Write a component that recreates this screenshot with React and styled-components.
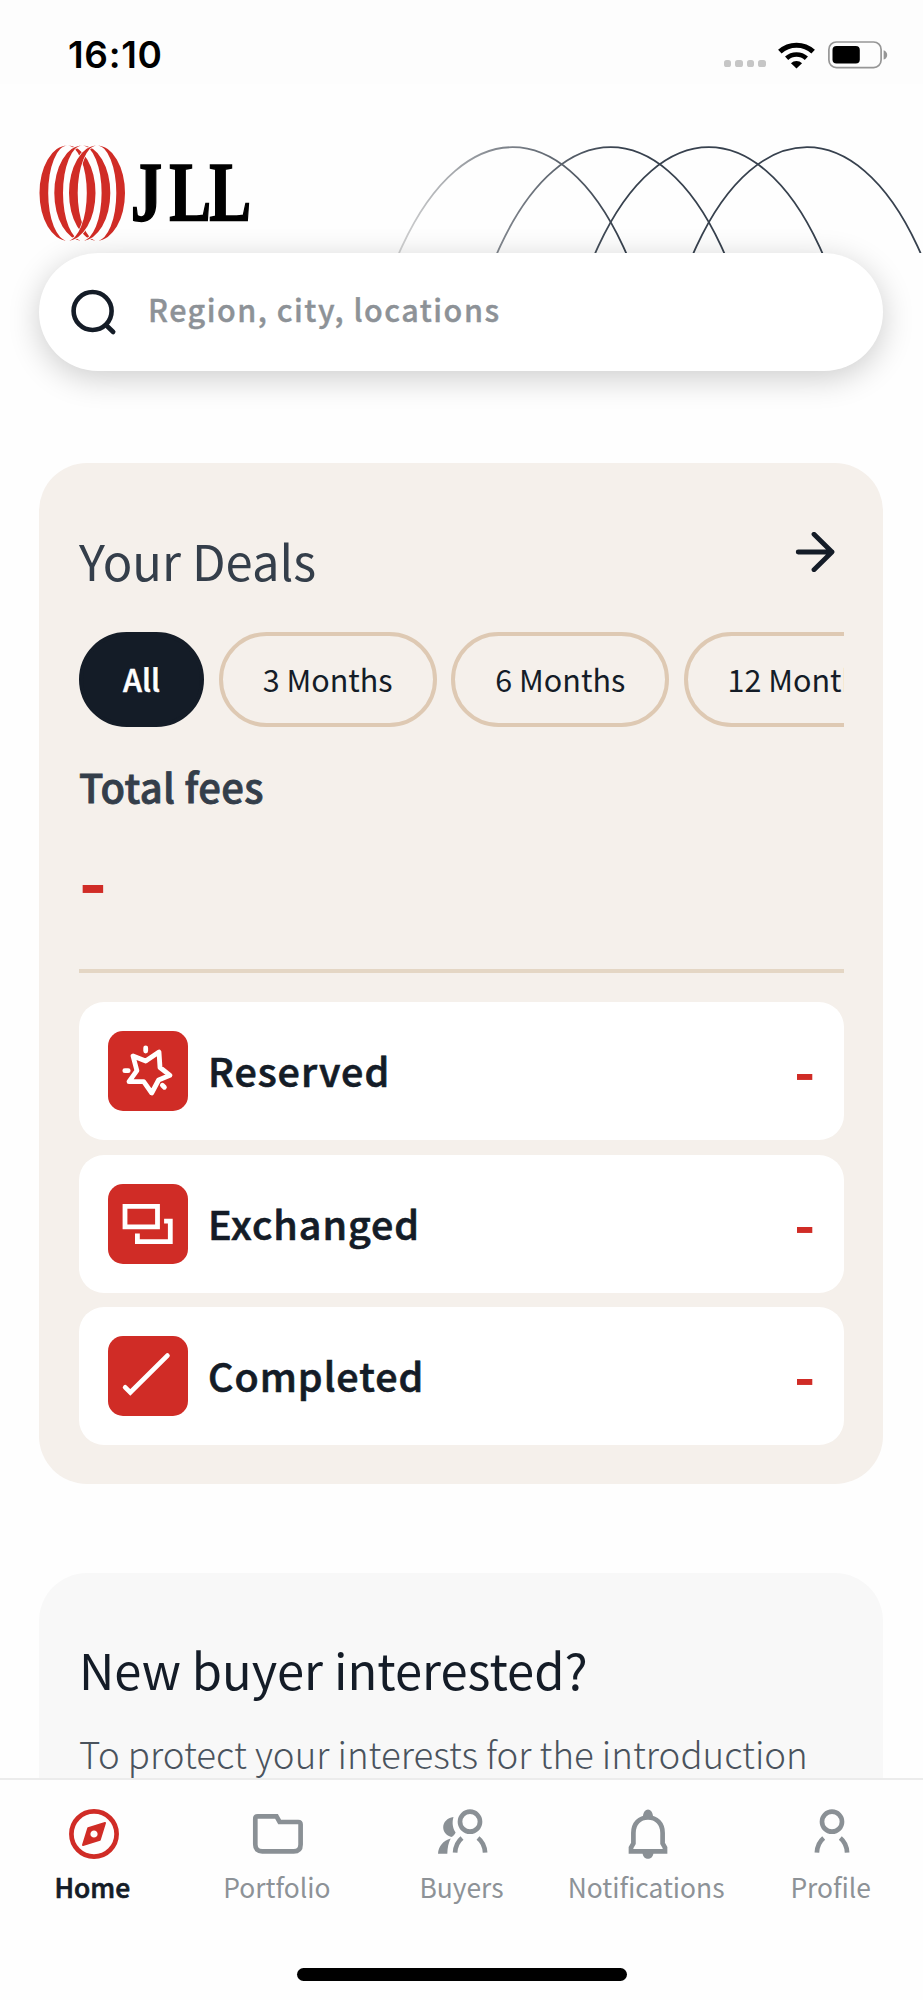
import React from "react";
import styled, { createGlobalStyle } from "styled-components";

const ink = "#141c27";
const slate = "#343e4a";
const muted = "#8d9297";
const red = "#d02c26";
const sand = "#dec9b3";

const GlobalStyle = createGlobalStyle`
  *, *::before, *::after { box-sizing: border-box; }
  body {
    margin: 0;
    background: #fefefe;
    color: ${ink};
    font-family: "Noto Sans CJK SC", "Noto Sans", sans-serif;
  }
`;

const Screen = styled.div`
  display: flex;
  flex-direction: column;
  width: 923px;
  height: 2000px;
  overflow: hidden;
`;

const StatusBar = styled.header`
  display: flex;
  flex: none;
  justify-content: space-between;
  height: 84px;
  padding: 0 35px 0 68px;
  background: #fdfdfd;
`;

const Clock = styled.time`
  padding-top: 33px;
  font: 600 37px/44px Inter, sans-serif;
  color: #000;
  letter-spacing: 0.7px;
`;

const StatusIcons = styled.div`
  display: flex;
  align-items: flex-end;
  height: 69px;
`;

const Signal = styled.div`
  display: flex;
  gap: 4px;
  padding-bottom: 1.8px;
  margin-right: 12px;
  i {
    width: 7.6px;
    height: 7.6px;
    border-radius: 2.6px;
    background: #c6c6c6;
  }
`;

const Scroll = styled.main`
  flex: 1;
  min-height: 0;
  overflow: hidden;
`;

const Masthead = styled.div`
  display: flex;
  align-items: flex-start;
  justify-content: space-between;
  height: 169px;
  padding: 61px 0 0 39px;
  svg { display: block; }
`;

const SearchBar = styled.div`
  position: relative;
  display: flex;
  align-items: center;
  height: 118px;
  margin: 0 40px 92px 39px;
  padding: 0 0 2px 29px;
  border-radius: 59px;
  background: #fff;
  box-shadow: 0 7px 32px rgba(0, 0, 0, 0.2);
`;

const Placeholder = styled.span`
  margin: 0 0 5px 29px;
  font-size: 30.5px;
  line-height: 44px;
  font-weight: 500;
  letter-spacing: 1.5px;
  color: ${muted};
  -webkit-text-stroke: 0.4px ${muted};
  white-space: nowrap;
`;

const Card = styled.section`
  margin: 0 40px 89.2px 39px;
  padding: ${(p) => p.$pad};
  border-radius: 48px;
  background: ${(p) => p.$bg};
`;

const CardHead = styled.div`
  display: flex;
  justify-content: space-between;
  height: 102px;
  svg { margin: 2px 9px 0 0; }
`;

const CardTitle = styled.h2`
  margin: 0;
  font-size: 48.9px;
  line-height: 60px;
  font-weight: 400;
  color: ${(p) => p.$color};
  white-space: nowrap;
`;

const Chips = styled.div`
  display: flex;
  gap: 14.8px;
  overflow: hidden;
`;

const Chip = styled.button`
  flex: none;
  width: ${(p) => p.$width}px;
  height: 95px;
  padding: 0 0 2px;
  border: 4px solid ${(p) => (p.$active ? ink : sand)};
  border-radius: 48px;
  background: ${(p) => (p.$active ? ink : "transparent")};
  color: ${(p) => (p.$active ? "#fff" : ink)};
  font-family: inherit;
  font-size: 30.5px;
  line-height: 44px;
  font-weight: ${(p) => (p.$active ? 500 : 400)};
  -webkit-text-stroke: ${(p) => (p.$active ? "0.5px #fff" : "0")};
  white-space: nowrap;
`;

const FeesLabel = styled.div`
  margin-top: 33.6px;
  font-size: 40px;
  line-height: 50px;
  font-weight: 500;
  letter-spacing: 0.3px;
  color: ${slate};
  -webkit-text-stroke: 0.8px ${slate};
`;

const FeesValue = styled.div`
  height: 158.4px;
  font-size: 75px;
  line-height: 133px;
  font-weight: 700;
  color: ${red};
`;

const Divider = styled.hr`
  height: 4px;
  margin: 0 0 29px;
  border: 0;
  background: #e4d6c4;
`;

const StageList = styled.div`
  display: flex;
  flex-direction: column;
  gap: 14.6px;
`;

const StageRow = styled.div`
  display: flex;
  align-items: center;
  height: 138px;
  padding: 0 29px;
  border-radius: 25px;
  background: #fff;
`;

const StageIcon = styled.div`
  flex: none;
  width: 80px;
  height: 80px;
  border-radius: 15px;
  background: ${red};
  svg { display: block; }
`;

const StageName = styled.span`
  flex: 1;
  margin: 0 0 2px 20px;
  font-size: 39.4px;
  line-height: 50px;
  font-weight: 500;
  letter-spacing: 1px;
  -webkit-text-stroke: 0.7px ${ink};
`;

const StageValue = styled.span`
  margin-bottom: 4px;
  font-size: 56px;
  line-height: 60px;
  font-weight: 700;
  color: ${red};
`;

const Blurb = styled.p`
  margin: 29.7px 0 0;
  font-size: 36.65px;
  line-height: 50px;
  font-weight: 300;
  color: #4a535d;
  white-space: nowrap;
`;

const TabBar = styled.nav`
  flex: none;
  height: 222px;
  border-top: 2px solid #ececec;
  background: #fefefe;
`;

const Tabs = styled.div`
  display: grid;
  grid-template-columns: repeat(5, 1fr);
  height: 188px;
  padding-top: 23.7px;
`;

const Tab = styled.a`
  display: flex;
  flex-direction: column;
  align-items: center;
  color: ${(p) => (p.$active ? ink : muted)};
  font-size: 26.4px;
  line-height: 30px;
  font-weight: ${(p) => (p.$active ? 500 : 400)};
  -webkit-text-stroke: ${(p) => (p.$active ? `0.7px ${ink}` : "0")};
  svg {
    margin: 0 0 8px 3px;
    color: ${(p) => (p.$active ? red : "#8a9095")};
  }
`;

const HomeIndicator = styled.div`
  width: 330px;
  height: 13px;
  margin: 0 auto;
  border-radius: 7px;
  background: #000;
`;

const arcLeft = (cx) =>
  `M${cx} 0.5A28 47.5 0 0 0 ${cx} 95.5A19.3 47.5 0 0 1 ${cx} 0.5Z`;
const arcRight = (cx) =>
  `M${cx} 0.5A28 47.5 0 0 1 ${cx} 95.5A19.3 47.5 0 0 0 ${cx} 0.5Z`;

function Logo() {
  const centers = [28.5, 43.3, 58];
  return (
    <svg width="216" height="98" viewBox="0 0 216 98">
      <defs>
        <clipPath id="upper"><rect width="90" height="48" /></clipPath>
      </defs>
      <g fill={red}>
        {centers.map((c) => <path key={c} d={arcLeft(c)} />)}
        {centers.map((c) => (
          <path key={c} d={arcRight(c)} stroke="#fefefe" strokeWidth="1.4" paintOrder="stroke" />
        ))}
        <g clipPath="url(#upper)">
          {centers.map((c) => (
            <path key={c} d={arcLeft(c)} stroke="#fefefe" strokeWidth="1.4" paintOrder="stroke" />
          ))}
        </g>
      </g>
      <text x="124 176 230" y="76" transform="scale(.74 1)" fontFamily="'Liberation Serif', serif"
        fontWeight="700" fontSize="85" fill="#000" stroke="#000" strokeWidth="1.6">JLL</text>
    </svg>
  );
}

function Arches() {
  return (
    <svg width="533" height="108" viewBox="390 145 533 108">
      <defs>
        <linearGradient id="fade" gradientUnits="userSpaceOnUse" x1="390" y1="0" x2="620" y2="0">
          <stop offset="0" stopColor="#d8d8d8" />
          <stop offset="0.45" stopColor="#858a91" />
          <stop offset="1" stopColor="#37414e" />
        </linearGradient>
      </defs>
      {[512.6, 610.7, 708.8, 807].map((x) => (
        <ellipse key={x} cx={x} cy="484.2" rx="156" ry="337" fill="none" stroke="url(#fade)" strokeWidth="1.8" />
      ))}
    </svg>
  );
}

function Wifi() {
  return (
    <svg width="37" height="27" viewBox="0 0 36 27" preserveAspectRatio="none">
      <g fill="none" stroke="#000">
        <path d="M1.8 9.6A23.6 23.6 0 0 1 34.2 9.6" strokeWidth="5" />
        <path d="M8.4 16.2A14.2 14.2 0 0 1 27.6 16.2" strokeWidth="4.6" />
      </g>
      <path d="M18 26.6L12.6 21.2A7.7 7.7 0 0 1 23.4 21.2Z" fill="#000" />
    </svg>
  );
}

function Battery() {
  return (
    <svg width="73" height="28" viewBox="0 0 73 28">
      <rect x="13.9" y="1" width="52.2" height="25.6" rx="7.5" fill="none" stroke="#969696" strokeWidth="1.7" />
      <rect x="17.5" y="5" width="27.3" height="17.4" rx="4" fill="#000" />
      <path d="M68.6 9.2C73.4 10.8 73.4 17 68.6 18.6Z" fill="#969696" />
    </svg>
  );
}

function SearchIcon() {
  return (
    <svg width="51" height="51" viewBox="0 0 51 51" fill="none" stroke={ink} strokeWidth="4.6" strokeLinecap="round">
      <circle cx="24.6" cy="25" r="19" />
      <path d="M38.5 39.5L45.2 46" />
    </svg>
  );
}

function ArrowIcon() {
  return (
    <svg width="40" height="40" viewBox="0 0 40 40" fill="none" stroke={ink} strokeWidth="4.8" strokeLinecap="round" strokeLinejoin="round">
      <path d="M3.2 20H37M19 2.3L37 20L19 37.7" />
    </svg>
  );
}

const stageArt = {
  reserved: (
    <path d="M25 25L37.7 30L51 21L52 36.5L62 44.3L50.6 49L43.7 62L35.7 50.7L21 50.7L28.9 39.7ZM37.7 16.8V20M16.8 39.7H20.2M54.4 54.2L56.4 56.2" />
  ),
  exchanged: (
    <path strokeLinecap="square" strokeLinejoin="miter" d="M17 22.3H49.5V42.8H17ZM58.5 37.2H62.3V57.6H29.4V52" />
  ),
  completed: <path strokeLinejoin="miter" d="M17.2 51.4L22.3 56.4L59.4 19.6" />,
};

const tabArt = {
  home: (
    <>
      <circle cx="30" cy="30" r="22.6" />
      <path fill="currentColor" fillRule="evenodd" strokeWidth="2" strokeLinejoin="round" d="M41 19L24.2 24.2L19 41L35.8 35.8ZM34.6 30A4.6 4.6 0 1 1 25.4 30A4.6 4.6 0 1 1 34.6 30Z" />
    </>
  ),
  portfolio: (
    <path d="M7.3 14.8Q7.3 12.4 9.8 12.4H28.5L31.6 18H50.2Q52.6 18 52.6 20.4V40.5Q52.6 47.4 45.7 47.4H14.2Q7.3 47.4 7.3 40.5Z" />
  ),
  buyers: (
    <>
      <circle cx="37" cy="17.7" r="10" />
      <path d="M29 34C24.7 37.5 22.4 42.3 22.1 48.6M45 34C49.5 37.5 51.7 42.3 52.1 48.6" />
      <path fill="currentColor" stroke="none" d="M20.5 13C14 14 10.2 18.3 10.2 23.2C10.2 28 13.3 31.4 18.3 33C20.5 31.8 22 30.3 22.6 28.4C19.5 24 18.9 18.5 20.5 13ZM17.7 34.5C10 36.5 5.5 42.5 5 49.7H14.3C14.6 43.5 15.3 39 17.7 34.5Z" />
    </>
  ),
  notifications: (
    <>
      <path d="M13 47.4V43.7L15.4 39.5V29C15.4 19.5 21.5 13.5 30 13.5S44.6 19.5 44.6 29V39.5L47 43.7V47.4Z" />
      <path fill="currentColor" stroke="none" d="M24.8 14C25 2.8 35 2.8 35.2 14ZM24.5 49H35.5C34.8 56.8 25.2 56.8 24.5 49Z" />
    </>
  ),
  profile: (
    <>
      <circle cx="30" cy="17.7" r="10" />
      <path d="M21.7 34C17.4 37.5 15.2 42.3 14.9 48.6M38.3 34C42.6 37.5 44.8 42.3 45.1 48.6" />
    </>
  ),
};

const chips = [
  { label: "All", width: 125, active: true },
  { label: "3 Months", width: 217.8 },
  { label: "6 Months", width: 217.8 },
  { label: "12 Months", width: 234 },
];

const stages = [
  { key: "reserved", name: "Reserved" },
  { key: "exchanged", name: "Exchanged" },
  { key: "completed", name: "Completed" },
];

const tabs = [
  { key: "home", name: "Home", active: true },
  { key: "portfolio", name: "Portfolio" },
  { key: "buyers", name: "Buyers" },
  { key: "notifications", name: "Notifications" },
  { key: "profile", name: "Profile" },
];

export default function App() {
  return (
    <Screen>
      <GlobalStyle />
      <StatusBar>
        <Clock>16:10</Clock>
        <StatusIcons>
          <Signal><i /><i /><i /><i /></Signal>
          <Wifi />
          <Battery />
        </StatusIcons>
      </StatusBar>
      <Scroll>
        <Masthead>
          <Logo />
          <Arches />
        </Masthead>
        <SearchBar>
          <SearchIcon />
          <Placeholder>Region, city, locations</Placeholder>
        </SearchBar>
        <Card $bg="#f5f0eb" $pad="67px 39px 38.4px 40px">
          <CardHead>
            <CardTitle $color={slate}>Your Deals</CardTitle>
            <ArrowIcon />
          </CardHead>
          <Chips>
            {chips.map((c) => (
              <Chip key={c.label} $width={c.width} $active={c.active}>{c.label}</Chip>
            ))}
          </Chips>
          <FeesLabel>Total fees</FeesLabel>
          <FeesValue>-</FeesValue>
          <Divider />
          <StageList>
            {stages.map((s) => (
              <StageRow key={s.key}>
                <StageIcon>
                  <svg width="80" height="80" viewBox="0 0 80 80" fill="none" stroke="#fff" strokeWidth="4.8" strokeLinecap="round" strokeLinejoin="round">
                    {stageArt[s.key]}
                  </svg>
                </StageIcon>
                <StageName>{s.name}</StageName>
                <StageValue>-</StageValue>
              </StageRow>
            ))}
          </StageList>
        </Card>
        <Card $bg="#f8f8f8" $pad="66px 40px 60px">
          <CardTitle $color={ink}>New buyer interested?</CardTitle>
          <Blurb>To protect your interests for the introduction</Blurb>
        </Card>
      </Scroll>
      <TabBar>
        <Tabs>
          {tabs.map((t) => (
            <Tab key={t.key} $active={t.active}>
              <svg width="60" height="60" viewBox="0 0 60 60" fill="none" stroke="currentColor" strokeWidth="4.7">
                {tabArt[t.key]}
              </svg>
              {t.name}
            </Tab>
          ))}
        </Tabs>
        <HomeIndicator />
      </TabBar>
    </Screen>
  );
}
